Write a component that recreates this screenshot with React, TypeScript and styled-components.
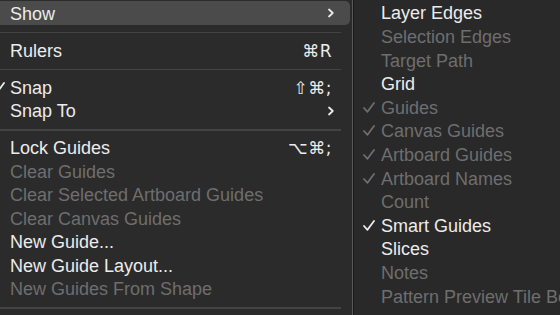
import React from "react";
import styled, { createGlobalStyle } from "styled-components";

const GlobalStyle = createGlobalStyle`
  html, body {
    margin: 0;
    padding: 0;
    background: #292929;
    overflow: hidden;
  }
  #root {
    width: 560px;
    height: 315px;
  }
`;

const Screen = styled.div`
  display: flex;
  width: 560px;
  height: 315px;
  overflow: hidden;
  font-family: "Liberation Sans", "DejaVu Sans", Arial, sans-serif;
  font-size: 18px;
  -webkit-font-smoothing: antialiased;
`;

const MainMenu = styled.div`
  width: 353px;
  flex: none;
  background: #2b2b2b;
  border-right: 1px solid #575757;
  box-shadow: 1px 0 0 #1b1b1b;
  padding-top: 1.25px;
  box-sizing: border-box;
`;

const SubMenu = styled.div`
  flex: 1;
  margin-left: 2px;
  background: #292929;
  padding-top: 1.2px;
  min-width: 0;
  overflow: hidden;
`;

const Row = styled.div<{ $gutter: number; $height: number; $active?: boolean; $disabled?: boolean }>`
  display: grid;
  grid-template-columns: ${(p) => p.$gutter}px 1fr auto;
  align-items: center;
  height: ${(p) => p.$height}px;
  padding-right: 15px;
  margin-right: 2px;
  color: ${(p) => (p.$disabled ? "#6e6e6e" : "#ececec")};
  background: ${(p) => (p.$active ? "#4b4b4b" : "transparent")};
  border-radius: 0 5px 5px 0;
  white-space: nowrap;
`;

const CheckCell = styled.div<{ $offset: number }>`
  display: flex;
  align-items: center;
  margin-left: ${(p) => p.$offset}px;
  height: 100%;
`;

const Label = styled.span`
  line-height: 1;
  padding-top: 1px;
`;

const Shortcut = styled.span`
  font-family: "DejaVu Sans", "Liberation Sans", sans-serif;
  font-size: 17px;
  letter-spacing: 0.5px;
  padding-right: 3px;
  padding-top: 1px;
`;

const Chevron = styled.svg`
  width: 8px;
  height: 10px;
`;

const Separator = styled.div`
  height: 13.5px;
  display: flex;
  align-items: center;
  padding-right: 11px;
  &::after {
    content: "";
    display: block;
    width: 100%;
    height: 1.5px;
    margin-top: 2px;
    background: #434343;
  }
`;

const Check = () => (
  <svg width="12" height="11" viewBox="0 0 12 11">
    <path d="M1 6 L4.5 9.8 L11 1" fill="none" stroke="currentColor" strokeWidth="1.8" strokeLinecap="round" strokeLinejoin="round" />
  </svg>
);

type Item = {
  label?: string;
  shortcut?: string;
  sub?: boolean;
  checked?: boolean;
  disabled?: boolean;
  active?: boolean;
  sep?: boolean;
};

const mainItems: Item[] = [
  { label: "Show", sub: true, active: true },
  { sep: true },
  { label: "Rulers", shortcut: "⌘R" },
  { sep: true },
  { label: "Snap", shortcut: "⇧⌘;", checked: true },
  { label: "Snap To", sub: true },
  { sep: true },
  { label: "Lock Guides", shortcut: "⌥⌘;" },
  { label: "Clear Guides", disabled: true },
  { label: "Clear Selected Artboard Guides", disabled: true },
  { label: "Clear Canvas Guides", disabled: true },
  { label: "New Guide..." },
  { label: "New Guide Layout..." },
  { label: "New Guides From Shape", disabled: true },
  { sep: true },
];

const showItems: Item[] = [
  { label: "Layer Edges" },
  { label: "Selection Edges", disabled: true },
  { label: "Target Path", disabled: true },
  { label: "Grid" },
  { label: "Guides", checked: true, disabled: true },
  { label: "Canvas Guides", checked: true, disabled: true },
  { label: "Artboard Guides", checked: true, disabled: true },
  { label: "Artboard Names", checked: true, disabled: true },
  { label: "Count", disabled: true },
  { label: "Smart Guides", checked: true },
  { label: "Slices" },
  { label: "Notes", disabled: true },
  { label: "Pattern Preview Tile Border", disabled: true },
];

function MenuRows({ items, gutter, height, checkOffset }: { items: Item[]; gutter: number; height: number; checkOffset: number }) {
  return (
    <>
      {items.map((it, i) =>
        it.sep ? (
          <Separator key={i} />
        ) : (
          <Row key={i} $gutter={gutter} $height={height} $active={it.active} $disabled={it.disabled}>
            <CheckCell $offset={checkOffset}>{it.checked && <Check />}</CheckCell>
            <Label>{it.label}</Label>
            {it.shortcut && <Shortcut>{it.shortcut}</Shortcut>}
            {it.sub && (
              <Chevron viewBox="0 0 8 10">
                <path d="M2 1.5 L5.8 5 L2 8.5" fill="none" stroke="currentColor" strokeWidth="1.7" strokeLinecap="round" strokeLinejoin="round" />
              </Chevron>
            )}
          </Row>
        )
      )}
    </>
  );
}

export default function App() {
  return (
    <>
      <GlobalStyle />
      <Screen>
        <MainMenu>
          <MenuRows items={mainItems} gutter={10} height={23.5} checkOffset={-7} />
        </MainMenu>
        <SubMenu>
          <MenuRows items={showItems} gutter={26} height={23.6} checkOffset={8} />
        </SubMenu>
      </Screen>
    </>
  );
}
